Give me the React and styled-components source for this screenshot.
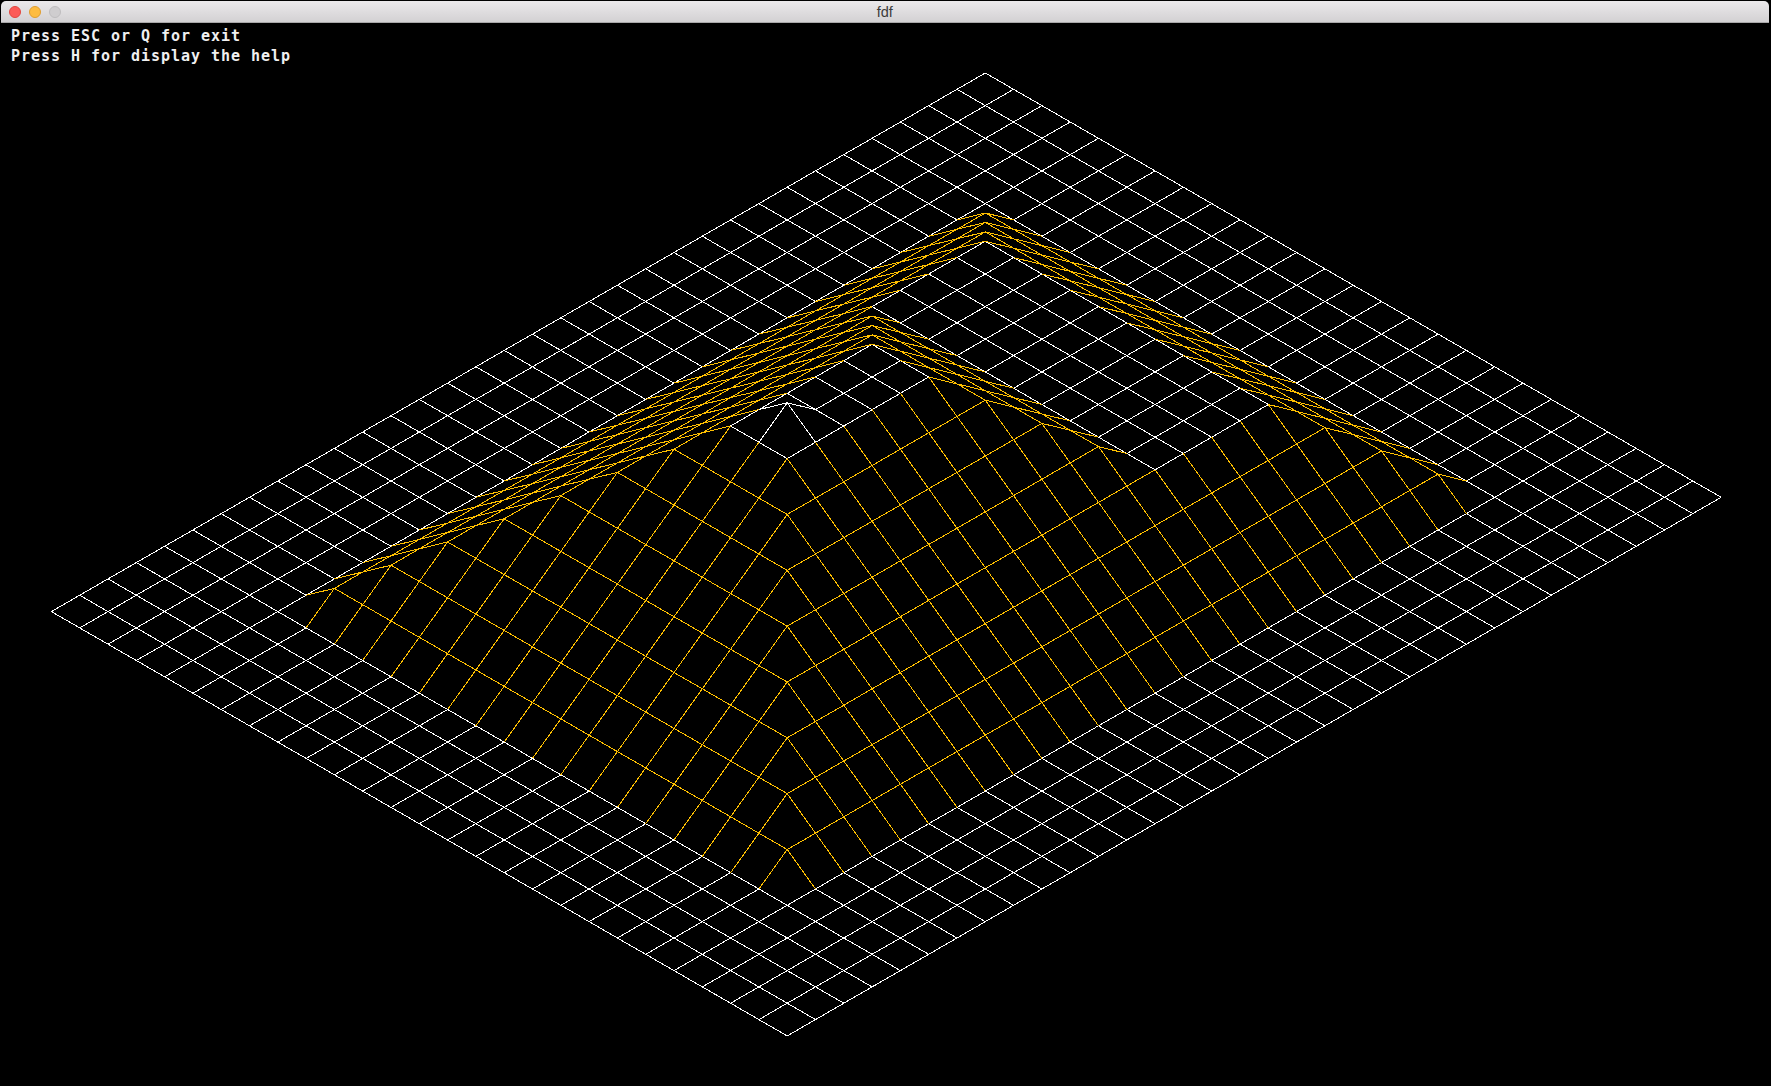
import React from "react";
import styled, { createGlobalStyle } from "styled-components";

const GlobalStyle = createGlobalStyle`
  html, body { margin: 0; padding: 0; background: #000; overflow: hidden; }
`;

const Window = styled.div`
  width: 1771px;
  height: 1086px;
  background: #000;
  display: flex;
  flex-direction: column;
`;

const TitleBar = styled.div`
  height: 22px;
  margin: 1px 2.5px 0 1px;
  box-sizing: border-box;
  border-bottom: 1px solid #a9a8a9;
  border-radius: 5px 5px 0 0;
  background: linear-gradient(#ebe9eb, #d3d1d3);
  display: flex;
  align-items: center;
  justify-content: center;
  position: relative;
`;

const Lights = styled.div`
  position: absolute;
  left: 8px;
  top: 5px;
  display: flex;
  gap: 8px;
`;

const Light = styled.span`
  width: 12px;
  height: 12px;
  border-radius: 50%;
  box-sizing: border-box;
  background: ${(p) => p.$color};
  border: 1px solid ${(p) => p.$edge};
`;

const Title = styled.span`
  font-family: "Liberation Sans", Arial, sans-serif;
  font-size: 14.5px;
  color: #3c3c3c;
`;

const Canvas = styled.div`
  flex: 1;
  position: relative;
`;

const Help = styled.div`
  position: absolute;
  left: 11px;
  top: 3px;
  font-family: "DejaVu Sans Mono", monospace;
  font-weight: 700;
  font-size: 15px;
  letter-spacing: 0.97px;
  line-height: 20px;
  color: #f0f0f0;
  white-space: pre;
`;

const Wire = styled.svg`
  position: absolute;
  left: 0;
  top: -23px;
  display: block;
`;

const COLS = 27; // v
const ROWS = 34; // u
const RAISE = 23.2;

// height profile along u: two tiers with a flat band in between
const tier = (u) => {
  if (u <= 8) return u - 4;
  if (u <= 12) return 4;
  if (u <= 16) return u - 8;
  return 8;
};

const height = (u, v) => {
  if (u === 20 && v === 13) return 9;
  return Math.max(0, Math.min(v - 4, 22 - v, 29 - u, tier(u)));
};

const project = (u, v) => [
  985.3 + 28.3 * (v - u),
  73 + 16.32 * (u + v) - RAISE * height(u, v),
];

const onBand = (u, v) => u >= 8 && u <= 12 && v >= 8 && v <= 18;

const isWhite = (a, b) => {
  const za = height(a[0], a[1]);
  const zb = height(b[0], b[1]);
  if (za === 0 && zb === 0) return true;
  if (za >= 8 && zb >= 8) return true;
  return za === 4 && zb === 4 && onBand(a[0], a[1]) && onBand(b[0], b[1]);
};

const buildEdges = () => {
  const white = [];
  const gold = [];
  const add = (a, b) => {
    const [x1, y1] = project(a[0], a[1]);
    const [x2, y2] = project(b[0], b[1]);
    const seg = `M${x1.toFixed(1)} ${y1.toFixed(1)}L${x2.toFixed(1)} ${y2.toFixed(1)}`;
    (isWhite(a, b) ? white : gold).push(seg);
  };
  for (let u = 0; u < ROWS; u++) {
    for (let v = 0; v < COLS; v++) {
      if (v + 1 < COLS) add([u, v], [u, v + 1]);
      if (u + 1 < ROWS) add([u, v], [u + 1, v]);
    }
  }
  return { white: white.join(""), gold: gold.join("") };
};

const edges = buildEdges();

export default function App() {
  return (
    <Window>
      <GlobalStyle />
      <TitleBar>
        <Lights>
          <Light $color="#fc5b57" $edge="#e2463f" />
          <Light $color="#fdbc40" $edge="#e09e2f" />
          <Light $color="#cfcdcf" $edge="#bfbdbf" />
        </Lights>
        <Title>fdf</Title>
      </TitleBar>
      <Canvas>
        <Wire width="1771" height="1086" viewBox="0 0 1771 1086">
          <path d={edges.white} stroke="#ffffff" strokeWidth="1" fill="none" shapeRendering="crispEdges" />
          <path d={edges.gold} stroke="#ffc000" strokeWidth="1" fill="none" shapeRendering="crispEdges" />
        </Wire>
        <Help>{"Press ESC or Q for exit\nPress H for display the help"}</Help>
      </Canvas>
    </Window>
  );
}
